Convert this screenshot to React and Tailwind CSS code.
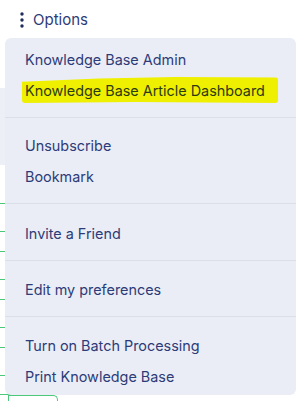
import { useState } from 'react';

const sections = [
  { pad: 'pt-[6px] pb-[11px]', items: ['Knowledge Base Admin', 'Knowledge Base Article Dashboard'] },
  { pad: 'pt-[12px] pb-[11px]', items: ['Unsubscribe', 'Bookmark'] },
  { pad: 'pt-[14px] pb-[11px]', items: ['Invite a Friend'] },
  { pad: 'pt-[13px] pb-[11px]', items: ['Edit my preferences'] },
  { pad: 'pt-[13px] pb-[3px]', items: ['Turn on Batch Processing', 'Print Knowledge Base'] },
];

const highlighted = 'Knowledge Base Article Dashboard';

function DotsIcon() {
  return (
    <svg width="4" height="16" viewBox="0 0 4 16" className="shrink-0">
      <circle cx="2" cy="2" r="1.7" fill="#1f2c5e" />
      <circle cx="2" cy="8" r="1.7" fill="#1f2c5e" />
      <circle cx="2" cy="14" r="1.7" fill="#1f2c5e" />
    </svg>
  );
}

function MenuItem({ label }) {
  if (label === highlighted) {
    return (
      <div className="relative flex h-[31px] items-center px-5">
        <span className="absolute left-[17px] top-[2px] h-[26px] w-[256px] rounded-[3px] bg-[#eef000] [clip-path:polygon(0_18%,30%_6%,60%_0,100%_2%,100%_100%,45%_96%,0_100%)]" />
        <span className="relative text-[14.4px] text-[#2c3a12]">{label}</span>
      </div>
    );
  }
  return (
    <div className="flex h-[31px] items-center px-5 text-[14.4px] text-[#2d3b78]">{label}</div>
  );
}

export default function App() {
  const [open] = useState(true);
  const rows = [39, 28, 20, 28, 20, 28, 20, 28, 19];

  return (
    <div className="relative h-[401px] w-[305px] overflow-hidden bg-white font-['Inter',sans-serif]">
      {/* header */}
      <div className="flex h-[38px] items-start pl-5 pt-[12px]">
        <button className="flex items-center gap-[9px] text-[15px] leading-[16px] text-[#2d3b78]">
          <DotsIcon />
          Options
        </button>
      </div>

      {/* page content behind the menu */}
      <div className="w-[150px]">
        <div className="mt-[50px] h-[77px] bg-[#eceff5]" />
        <div className="flex flex-col border-r border-[#e3e6ee]">
          {rows.map((h, i) => (
            <div key={i} className="border-b border-[#4cc87a]" style={{ height: h }} />
          ))}
        </div>
        <div className="ml-[8px] h-[10px] w-[50px] rounded-tr-[5px] border-l border-r border-t border-[#4cc87a]" />
      </div>

      {/* dropdown */}
      {open && (
        <div className="absolute left-[5px] top-[38px] w-[291px] rounded-[6px] bg-[#eaedf5]">
          {sections.map((s, i) => (
            <div key={i} className={`${s.pad} ${i > 0 ? 'border-t border-[#dcdfe9]' : ''}`}>
              {s.items.map((label) => (
                <MenuItem key={label} label={label} />
              ))}
            </div>
          ))}
        </div>
      )}
    </div>
  );
}
